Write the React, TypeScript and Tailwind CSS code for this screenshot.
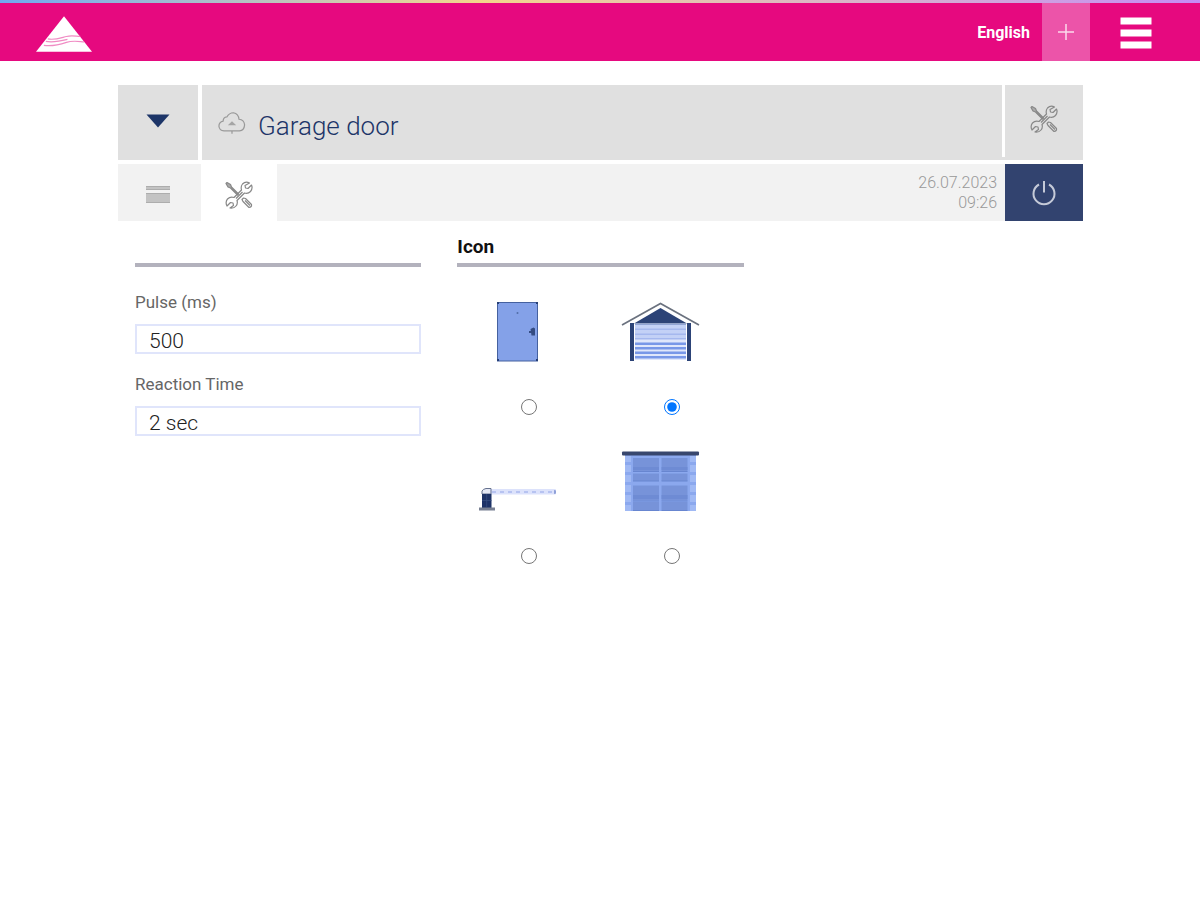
import { useState } from "react";
import type { ReactElement } from "react";

function Logo() {
  return (
    <svg viewBox="0 0 57 36" className="h-9 w-14" aria-hidden="true">
      <path d="M28.500 0L57 36H0z" fill="#fff" />
      <path
        d="M12 23C19 24.500 25 22 31 20.500S41 20.500 45 20.500M8 29.500C17 31 25 28.500 31 26.500S42 25.500 49 26M10 25.500C18 27 26 25 32 23.500"
        fill="none"
        stroke="#f08cc4"
        strokeWidth="1.200"
      />
    </svg>
  );
}

function Tools() {
  return (
    <svg
      viewBox="0 0 28 28"
      className="size-7"
      fill="none"
      stroke="#888"
      strokeWidth="1.200"
      strokeLinejoin="round"
      aria-hidden="true"
    >
      <path d="M2 1.500L5.500 3.500L6.500 6L13.500 13L12.500 14L5.500 7L3 6L1 2.500z" fill="#aaa" />
      <path d="M17 18.500L18.500 17L20.500 17.500L26.500 23.500Q27 26 24 26.500L18 20.500zM20 19.500L25 24.500" />
      <path d="M24.500 2Q20.500 0 17.500 3Q15.500 5.500 16.500 9L9 16.500Q5 15.500 2.500 18Q0 21 2 25L5.500 21.500L8 22L8.500 24.500L5 27Q9 27.500 11 25Q13 22.500 12 19.500L19.500 12Q23 13 25.500 10.500Q28 7.500 26.500 4L23 7.500L20.500 7L20 4.500z" />
      <path d="M11 17.500L17.500 11" />
    </svg>
  );
}

function CloudUpload() {
  return (
    <svg viewBox="0 0 30 24" className="h-6 w-7" fill="none" stroke="#999" strokeWidth="1.300" aria-hidden="true">
      <path d="M12 20.500H6.500Q1.500 20 1 15.500Q1 11 5.500 10Q5.500 6 9.500 5.500Q12 1 16.500 1Q22 2 22.500 8Q28 8.500 28.500 14Q28 20 23 20.500H12M15 23.500V20.500" />
      <path d="M10.500 14.500L15 10L19.500 14.500z" fill="#a5a5a5" stroke="none" />
    </svg>
  );
}

function Door() {
  return (
    <svg viewBox="0 0 80 60" className="h-15 w-20" aria-hidden="true">
      <rect x="20.500" y="0.500" width="40" height="58.500" fill="#84a1e8" stroke="#45619f" />
      <path d="M20 0h2v2h-2zM59 0h2v2h-2zM20 57h2v2h-2zM59 57h2v2h-2z" fill="#263f76" />
      <circle cx="40.500" cy="11" r="1" fill="#526da8" />
      <path d="M53.500 27l3-1.500 1.500 1v7h-3.500zM52 29h5v2h-5z" fill="#344c82" />
    </svg>
  );
}

function Garage() {
  const slats = [28, 33, 37.5, 42, 46.5, 51, 55.5];
  return (
    <svg viewBox="0 0 80 60" className="h-15 w-20" aria-hidden="true">
      <path d="M2 23L40.500 1.500L79 23" fill="none" stroke="#6b727f" strokeWidth="1.700" />
      <path d="M40.500 6L67 21.500H14z" fill="#2c4377" />
      <path d="M10 21h4v38h-4zM67 21h4v38h-4z" fill="#2c4377" />
      <rect x="15" y="23" width="51" height="35" fill="#dfe7fb" />
      <rect x="15" y="23" width="51" height="14" fill="#c3d1f6" />
      {slats.map((y, i) => (
        <rect key={y} x="15" y={y - 1.5} width="51" height={i < 3 ? 1.5 : 2.5} fill={i < 3 ? "#a5b8ee" : "#7898e8"} />
      ))}
      <path d="M15 21.500h51v1.500H15z" fill="#91a5d5" />
    </svg>
  );
}

function Barrier() {
  return (
    <svg viewBox="0 0 80 60" className="h-15 w-20" aria-hidden="true">
      <rect x="12" y="38" width="67" height="5.500" rx="1" fill="#dce2fb" />
      <path d="M15 41h63" stroke="#b7c3f1" strokeWidth="2" strokeDasharray="4 4" />
      <path d="M77 39l2 .5v3l-2 .5z" fill="#8fa0d8" />
      <path d="M5 43V40Q6 38 9 37.500h5V43z" fill="#e4e8f5" stroke="#65718e" />
      <rect x="5" y="43" width="9.500" height="14" fill="#1d3267" />
      <path d="M9.700 43v13M5 49.500h9.500" stroke="#395083" strokeWidth="0.700" />
      <rect x="2" y="56.500" width="16" height="3" fill="#777f91" />
    </svg>
  );
}

function SectionalDoor() {
  return (
    <svg viewBox="0 0 80 60" className="h-15 w-20" aria-hidden="true">
      <rect x="5" y="4" width="71" height="56" fill="#8ba8ee" />
      <path d="M5 5h6v6H5zM5 14h6v7H5zM5 24h6v7H5zM5 34h6v7H5zM5 44h6v7H5zM5 54h6v6H5zM70 5h6v6h-6zM70 14h6v7h-6zM70 24h6v7h-6zM70 34h6v7h-6zM70 44h6v7h-6zM70 54h6v6h-6z" fill="#a0b9f4" />
      <path d="M13 7h26v13.500H13zM41.500 7h26v13.500h-26zM13 22.500h26V30H13zM41.500 22.500h26V30h-26zM13 34.500h26v15H13zM41.500 34.500h26v15h-26zM13 51h26v8H13zM41.500 51h26v8h-26z" fill="#7793d9" />
      <path d="M13 20.500h26M41.500 20.500h26M13 30h26M41.500 30h26M13 50h26M41.500 50h26M13 59.500h26M41.500 59.500h26" stroke="#6886d0" />
      <path d="M13 16h26v3H13zM41.500 16h26v3h-26zM13 44h26v4H13zM41.500 44h26v4h-26z" fill="#6e8bd4" />
      <rect x="2" y="0.500" width="77" height="4" rx="1" fill="#38476e" />
    </svg>
  );
}

const icons: { id: string; name: string; Picture: () => ReactElement }[] = [
  { id: "door", name: "Door", Picture: Door },
  { id: "garage", name: "Garage", Picture: Garage },
  { id: "barrier", name: "Barrier", Picture: Barrier },
  { id: "sectional", name: "Sectional door", Picture: SectionalDoor },
];

function TextField({ id, label, value }: { id: string; label: string; value: string }) {
  return (
    <div className="flex flex-col gap-3">
      <label htmlFor={id} className="text-[17px] leading-5 text-[#666]">
        {label}
      </label>
      <input
        id={id}
        type="text"
        defaultValue={value}
        className="h-[30px] w-full border-2 border-[#e0e5fb] bg-white px-3 pt-1 text-[21px] leading-6 font-light text-[#222]"
      />
    </div>
  );
}

export default function App() {
  const [selected, setSelected] = useState("garage");

  return (
    <div className="min-h-screen bg-white font-['Roboto','Liberation_Sans',sans-serif]">
      <div className="h-[3px] bg-linear-to-r from-[#6fa8f0] via-[#f3d68a] via-40% to-[#c58cf5]" />
      <header className="flex h-[58px] items-center bg-[#e6097f] pr-12 pl-9">
        <a href="#home" aria-label="Home" className="pt-1">
          <Logo />
        </a>
        <a href="#language" className="mr-3 ml-auto pt-0.5 text-[16px] leading-5 font-bold text-white">
          English
        </a>
        <button type="button" aria-label="Add" className="flex h-full w-12 items-center justify-center bg-[#ec54a9]">
          <svg viewBox="0 0 16 16" className="size-4" stroke="#fbd9ec" strokeWidth="1.500" aria-hidden="true">
            <path d="M8 0v16M0 8h16" />
          </svg>
        </button>
        <button type="button" aria-label="Menu" className="ml-[30px] pt-0.5">
          <svg viewBox="0 0 32 32" className="size-8" fill="#fff" aria-hidden="true">
            <path d="M0.500 0.500h31v7h-31zM0.500 12.500h31v7h-31zM0.500 24.500h31v7h-31z" />
          </svg>
        </button>
      </header>

      <main className="pt-6 pr-[117px] pl-[118px]">
        <div className="flex h-[75px] items-start bg-[#e0e0e0]">
          <button type="button" aria-label="Expand" className="flex h-full w-20 items-center justify-center pb-1">
            <svg viewBox="0 0 24 14" className="h-3.5 w-6" aria-hidden="true">
              <path d="M0.500 0.500h23L12 13.500z" fill="#1d3568" />
            </svg>
          </button>
          <div className="h-full w-1 bg-white" />
          <div className="flex h-full flex-1 items-center gap-3 px-4">
            <CloudUpload />
            <h1 className="pt-1.5 text-[26px] leading-8 font-light text-[#1d3568]">Garage door</h1>
          </div>
          <div className="h-[72px] w-[3px] bg-white" />
          <button type="button" aria-label="Settings" className="flex h-full w-[78px] items-center justify-center pb-2">
            <Tools />
          </button>
        </div>

        <div className="mt-1 flex h-[57px] bg-[#f2f2f2]">
          <button type="button" aria-label="List" className="flex w-[83px] items-center justify-center pt-1 pr-1">
            <svg viewBox="0 0 24 20" className="h-5 w-6" aria-hidden="true">
              <path d="M0 1h24v4H0zM0 8h24v10H0z" fill="#c3c3c3" />
              <path d="M0 1.500h24M0 4.500h24M0 8.500h24M0 17.500h24" stroke="#adadad" />
            </svg>
          </button>
          <button type="button" aria-label="Configuration" className="flex w-[76px] items-center justify-center bg-white pt-1">
            <Tools />
          </button>
          <div className="flex flex-1 items-center justify-end pr-2">
            <time dateTime="2023-07-26T09:26" className="text-right text-[16px] leading-5 font-light text-[#999]">
              26.07.2023
              <br />
              09:26
            </time>
          </div>
          <button type="button" aria-label="Power" className="flex w-[78px] items-center justify-center bg-[#32436f]">
            <svg viewBox="0 0 26 26" className="size-[26px]" fill="none" stroke="#c5cad8" strokeWidth="2" aria-hidden="true">
              <path d="M8 4.500A10.500 10.500 0 1 0 18 4.500M13 1V12.500" />
            </svg>
          </button>
        </div>

        <div className="grid grid-cols-3 gap-9 px-[17px] pt-4">
          <section className="flex flex-col gap-[25px]">
            <div className="h-[30px] border-b-4 border-[#b3b2bd]" />
            <div className="flex flex-col gap-5">
              <TextField id="pulse" label="Pulse (ms)" value="500" />
              <TextField id="reaction" label="Reaction Time" value="2 sec" />
            </div>
          </section>

          <section className="flex flex-col gap-[35px]">
            <h2 className="h-[30px] border-b-4 border-[#b3b2bd] text-[19px] leading-5 font-bold text-[#111]">Icon</h2>
            <div className="grid grid-cols-2 gap-y-9">
              {icons.map(({ id, name, Picture }) => (
                <label key={id} className="flex flex-col items-center gap-[37px]">
                  <span className="pr-6">
                    <Picture />
                  </span>
                  <input
                    type="radio"
                    name="icon"
                    aria-label={name}
                    checked={selected === id}
                    onChange={() => setSelected(id)}
                    className="size-4 accent-[#0075ff]"
                  />
                </label>
              ))}
            </div>
          </section>
        </div>
      </main>
    </div>
  );
}
